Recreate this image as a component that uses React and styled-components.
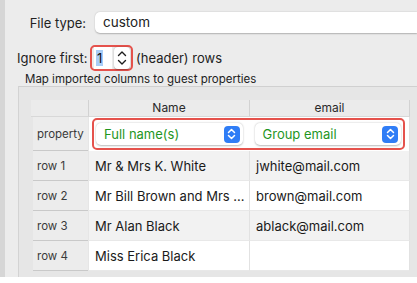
import React from "react";
import styled, { createGlobalStyle } from "styled-components";

const GlobalStyle = createGlobalStyle`
  body {
    margin: 0;
    background: #ffffff;
    font-family: Inter, "Noto Sans", sans-serif;
    -webkit-font-smoothing: antialiased;
  }
`;

const rows = [
  { name: "Mr & Mrs K. White", email: "jwhite@mail.com" },
  { name: "Mr Bill Brown and Mrs ...", email: "brown@mail.com" },
  { name: "Mr Alan Black", email: "ablack@mail.com" },
  { name: "Miss Erica Black", email: "" },
];

function UpDown({ color = "#fff" }) {
  return (
    <svg width="9" height="12" viewBox="0 0 9 12">
      <path d="M1.5 4.5 L4.5 1.5 L7.5 4.5 M1.5 7.5 L4.5 10.5 L7.5 7.5" fill="none" stroke={color} strokeWidth="1.5" strokeLinecap="round" strokeLinejoin="round" />
    </svg>
  );
}

function Chevron({ up }) {
  return (
    <svg width="10" height="7" viewBox="0 0 10 7">
      <path d={up ? "M1.5 5.5 L5 2 L8.5 5.5" : "M1.5 1.5 L5 5 L8.5 1.5"} fill="none" stroke="#1d1d1d" strokeWidth="1.4" strokeLinecap="round" strokeLinejoin="round" />
    </svg>
  );
}

export default function App() {
  return (
    <>
      <GlobalStyle />
      <Frame>
        <Form>
          <FieldRow>
            <Label>File type:</Label>
            <TextInput>custom</TextInput>
          </FieldRow>
          <FieldRow $spaced>
            <Label>Ignore first:</Label>
            <Highlight>
              <NumberField>
                <Selected>1</Selected>
              </NumberField>
              <Arrows>
                <Chevron up />
                <Chevron />
              </Arrows>
            </Highlight>
            <Suffix>(header) rows</Suffix>
          </FieldRow>
          <Caption>Map imported columns to guest properties</Caption>
        </Form>
        <Panel>
          <Table>
            <HeadCorner />
            <HeadCell>Name</HeadCell>
            <HeadCell>email</HeadCell>

            <RowHead>property</RowHead>
            <PropertyCell>
              <Outline>
                <Select>
                  Full name(s)
                  <SelectButton><UpDown /></SelectButton>
                </Select>
                <Select>
                  Group email
                  <SelectButton><UpDown /></SelectButton>
                </Select>
              </Outline>
            </PropertyCell>

            {rows.map((r, i) => (
              <React.Fragment key={i}>
                <RowHead>row {i + 1}</RowHead>
                <Cell $alt={i % 2 === 0}>{r.name}</Cell>
                <Cell $alt={i % 2 === 0}>{r.email}</Cell>
              </React.Fragment>
            ))}
          </Table>
        </Panel>
      </Frame>
    </>
  );
}

const Frame = styled.div`
  width: 417px;
  height: 277px;
  box-sizing: border-box;
  overflow: hidden;
  background: #ececec;
  border-left: 5px solid #d6d6d6;
  padding-top: 12px;
`;

const Form = styled.div`
  padding-left: 12px;
  display: flex;
  flex-direction: column;
`;

const FieldRow = styled.div`
  display: flex;
  align-items: center;
  margin-top: ${(p) => (p.$spaced ? "12px" : "0")};
`;

const Label = styled.div`
  width: 69px;
  margin-right: 4px;
  text-align: right;
  font-size: 13px;
  color: #222;
  white-space: nowrap;
`;

const TextInput = styled.div`
  flex: 1;
  margin-left: 5px;
  height: 21px;
  line-height: 21px;
  background: #fff;
  border-radius: 5px 0 0 5px;
  box-shadow: 0 0.5px 1.5px rgba(0, 0, 0, 0.25);
  padding-left: 8px;
  font-size: 13.5px;
  color: #222;
`;

const Highlight = styled.div`
  display: flex;
  align-items: center;
  gap: 2px;
  height: 22px;
  padding: 0 1px 0 2px;
  border: 2px solid #e5524c;
  border-radius: 5px;
`;

const NumberField = styled.div`
  width: 18px;
  height: 22px;
  background: #fff;
  display: flex;
  align-items: center;
  padding-left: 2px;
  box-sizing: border-box;
`;

const Selected = styled.span`
  background: #a9cdf7;
  font-size: 13px;
  line-height: 16px;
  padding: 0 1px;
  color: #111;
`;

const Arrows = styled.div`
  width: 16px;
  height: 22px;
  background: #fff;
  border-radius: 4px;
  box-shadow: 0 0.5px 1.5px rgba(0, 0, 0, 0.3);
  display: flex;
  flex-direction: column;
  align-items: center;
  justify-content: center;
  gap: 2px;
`;

const Suffix = styled.div`
  margin-left: 3px;
  font-size: 13px;
  color: #222;
`;

const Caption = styled.div`
  margin: 1px 0 0 8px;
  height: 14px;
  line-height: 14px;
  font-size: 11.5px;
  color: #222;
`;

const Panel = styled.div`
  margin-left: 13px;
  border-top: 1px solid #d0d0d0;
  border-left: 1px solid #d3d3d3;
  background: #e6e6e6;
  padding: 13px 0 0 12px;
  height: 200px;
`;

const Table = styled.div`
  display: grid;
  grid-template-columns: 58px 161px 160px;
  grid-auto-rows: 30px;
  grid-template-rows: 17px 34px;
`;

const HeadCorner = styled.div`
  background: #ebebeb;
  border-right: 1px solid #d2d2d2;
  border-bottom: 1px solid #d8d8d8;
`;

const HeadCell = styled.div`
  background: #ebebeb;
  border-right: 1px solid #d2d2d2;
  border-bottom: 1px solid #d8d8d8;
  text-align: center;
  font-size: 12px;
  line-height: 16px;
  color: #2a2a2a;
`;

const RowHead = styled.div`
  margin: 0 1px 0 2px;
  border-bottom: 1px solid #c9c9c9;
  background: #ececec;
  display: flex;
  align-items: center;
  padding-left: 4px;
  font-size: 11.5px;
  color: #3a3a3a;
`;

const PropertyCell = styled.div`
  grid-column: span 2;
  background: #fff;
  border-right: 1px solid #e0e0e0;
  display: flex;
  align-items: center;
  padding-left: 3px;
`;

const Outline = styled.div`
  display: flex;
  align-items: center;
  gap: 12px;
  width: 313px;
  height: 32px;
  box-sizing: border-box;
  border: 2px solid #e5524c;
  border-radius: 5px;
  padding: 0 2px;
`;

const Select = styled.div`
  flex: 1;
  height: 22px;
  background: #fff;
  border-radius: 5px;
  box-shadow: 0 0.5px 2px rgba(0, 0, 0, 0.28);
  display: flex;
  align-items: center;
  justify-content: space-between;
  padding: 0 3px 0 8px;
  font-size: 13px;
  color: #1f961f;
`;

const SelectButton = styled.div`
  width: 16px;
  height: 17px;
  border-radius: 4px;
  background: #2f7df6;
  display: flex;
  align-items: center;
  justify-content: center;
`;

const Cell = styled.div`
  background: ${(p) => (p.$alt ? "#f2f2f2" : "#ffffff")};
  border-right: 1px solid #e2e2e2;
  border-bottom: 1px solid #e8e8e8;
  display: flex;
  align-items: center;
  padding-left: 6px;
  font-size: 13px;
  color: #1a1a1a;
  white-space: nowrap;
  overflow: hidden;
`;
